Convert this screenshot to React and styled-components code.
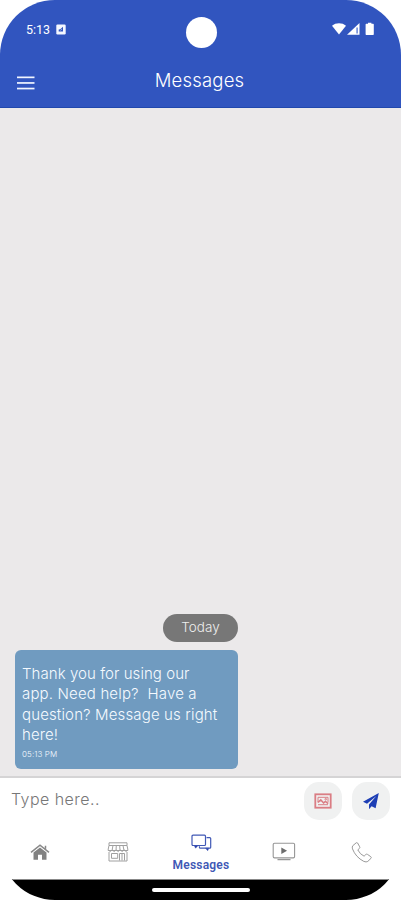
import React from "react";
import styled, { createGlobalStyle } from "styled-components";

const messageLines = [
  { text: "Thank you for using our", spacing: "0.06px" },
  { text: "app. Need help?\u00a0 Have a", spacing: "0.16px" },
  { text: "question? Message us right", spacing: "0.14px" },
  { text: "here!", spacing: "0.1px" },
];

export default function App() {
  return (
    <Phone>
      <GlobalStyle />
      <Header>
        <StatusBar>
          <Clock>
            5:13
            <AlarmIcon />
          </Clock>
          <Camera />
          <StatusIcons />
        </StatusBar>
        <AppBar>
          <MenuButton aria-label="Menu">
            <MenuIcon />
          </MenuButton>
          <Title>Messages</Title>
        </AppBar>
      </Header>

      <Chat>
        <Thread>
          <DayLabel>Today</DayLabel>
          <Bubble>
            {messageLines.map((line) => (
              <Line key={line.text} $spacing={line.spacing}>
                {line.text}
              </Line>
            ))}
            <Time>05:13 PM</Time>
          </Bubble>
        </Thread>
      </Chat>

      <Composer>
        <Placeholder>Type here..</Placeholder>
        <RoundButton aria-label="Add image">
          <ImageIcon />
        </RoundButton>
        <RoundButton aria-label="Send">
          <SendIcon />
        </RoundButton>
      </Composer>

      <Tabs>
        <Tab>
          <HomeIcon />
        </Tab>
        <Tab>
          <StoreIcon />
        </Tab>
        <Tab $active>
          <ChatIcon />
          <TabLabel>Messages</TabLabel>
        </Tab>
        <Tab>
          <VideoIcon />
        </Tab>
        <Tab>
          <PhoneIcon />
        </Tab>
      </Tabs>

      <GestureBar>
        <Handle />
      </GestureBar>
    </Phone>
  );
}

function AlarmIcon() {
  return (
    <svg width="10" height="11" viewBox="0 0 10 11">
      <rect x="0.3" y="0.5" width="9.4" height="10" rx="1.2" fill="#f4f7ff" />
      <path d="M2.7 7.6V5.5l1.5-.3 2.8-2.4v4.6H4.8z" fill="#3155bf" />
      <path d="M4.5 6.3l1.3-1.2" stroke="#f4f7ff" strokeWidth="0.7" />
    </svg>
  );
}

function StatusIcons() {
  return (
    <svg width="42" height="14" viewBox="0 0 42 14" fill="#fff">
      <path d="M0 3.7C3.8.4 10.2.4 14 3.7L7 12.500z" />
      <path d="M27.500 1V12.800H15z" />
      <path d="M24.300 5.600h1.600v5.800h-1.600z" fill="#6f8ada" />
      <path d="M34.300 1.800h1.700V.8h3.400v1h1.700q.7 0 .7.700v9.800q0 .7-.7.700h-6.800q-.7 0-.7-.7V2.500q0-.7.7-.7z" />
    </svg>
  );
}

function MenuIcon() {
  return (
    <svg width="18" height="14" viewBox="0 0 18 14" fill="#f1f5ff">
      <rect y="0.5" width="17.5" height="1.7" />
      <rect y="6.1" width="17.5" height="1.7" />
      <rect y="11.7" width="17.5" height="1.7" />
    </svg>
  );
}

function ImageIcon() {
  return (
    <svg width="18" height="16" viewBox="0 0 18 16" fill="none" stroke="#da7d84">
      <rect x="1.3" y="1.3" width="15.4" height="13.4" strokeWidth="1.8" />
      <path d="M4 9.500V4.300h10v5M4 11.700h10" strokeWidth="1" />
      <path d="M4 9.400l2.800-2.500 2.800 3 1.800-1.500 2.800 2.300" strokeWidth="1.500" />
      <circle cx="11.700" cy="6.200" r="0.800" strokeWidth="1" />
    </svg>
  );
}

function SendIcon() {
  return (
    <svg width="18" height="18" viewBox="0 0 18 18" fill="#1e3fb5">
      <path d="M16.800 1L1 9.800l4 2L14.300 4 7 12.500v4.700l2.600-3 4 2z" />
    </svg>
  );
}

function HomeIcon() {
  return (
    <svg width="20" height="18" viewBox="0 0 20 18">
      <path
        d="M1 9.300l9-7.200 9 7.200M15.500 2.800v3"
        fill="none"
        stroke="#898989"
        strokeWidth="1.500"
      />
      <path d="M3.500 9.500L10 4.400l6.500 5.100v7.300H12v-5H8v5H3.500z" fill="#828282" />
    </svg>
  );
}

function StoreIcon() {
  return (
    <svg width="22" height="20" viewBox="0 0 22 20" fill="none" stroke="#a0a0a0" strokeWidth="1">
      <path d="M2 .8h18v2.700H2zM2 3.500L1.200 7.200v1.300h19.600V7.200L20 3.500M6 3.500L5 8.500M9.300 3.500L9 8.500M12.700 3.500l.3 5M16 3.500l1 5" />
      <path d="M1.200 8q2 3 4 0 2 3 4 0 2 3 4 0 2 3 4 0 2 3 3.600 0M2 10v9h18v-9M4.500 11.500h6.200v4.800H4.500zM12.500 18.500v-7h5v7M15 11.500v7" />
    </svg>
  );
}

function ChatIcon() {
  return (
    <svg width="21" height="18" viewBox="0 0 21 18" fill="none" stroke="#4058b5" strokeWidth="1.200">
      <rect x="1" y="1.200" width="13.500" height="10.300" rx="1" />
      <path d="M15.500 3.600h3.200q1 0 1 1v8.600q0 1-1 1H9.400q-1 0-1-1v-.9" />
      <path d="M3.200 11.500h3.900l-2.500 2.700zM14.500 14.200h3.300l-1.100 2.500z" fill="#2940ad" strokeWidth="0.500" />
    </svg>
  );
}

function VideoIcon() {
  return (
    <svg width="24" height="20" viewBox="0 0 24 20" fill="none" stroke="#969696" strokeWidth="1.100">
      <rect x="1.200" y="1.300" width="21.400" height="14.600" rx="1.300" />
      <path d="M5.500 17.700h13" strokeWidth="1.200" />
      <path d="M9.300 5.600l5.800 3.200-5.800 3.200z" fill="#6d6d6d" stroke="none" />
    </svg>
  );
}

function PhoneIcon() {
  return (
    <svg width="21" height="21" viewBox="0 0 21 21" fill="none" stroke="#999" strokeWidth="1" strokeLinejoin="round">
      <path d="M5.200.8L1.800 3.700q-1 1.100-.3 3.200 3.200 8.300 11.300 12.500 2.500 1.100 4 0l3.200-3.100q.7-.9-.2-1.600l-3.300-2.300q-.9-.6-1.700.1l-1.700 1.700q-4-1.800-6.300-6.300l1.700-1.600q.7-.7.200-1.500L6.600 1q-.6-.7-1.400-.2z" />
    </svg>
  );
}

const GlobalStyle = createGlobalStyle`
  * {
    box-sizing: border-box;
  }

  body {
    margin: 0;
    background: #fff;
  }

  svg {
    display: block;
    flex-shrink: 0;
  }
`;

const Phone = styled.div`
  display: flex;
  flex-direction: column;
  width: 401px;
  height: 900px;
  overflow: hidden;
  border-radius: 55px;
  background: #fff;
  font-family: "Inter", "Liberation Sans", sans-serif;
`;

const Header = styled.header`
  height: 108px;
  background: #3155bf;
  border-bottom: 1px solid #2148ad;
  color: #fff;
`;

const StatusBar = styled.div`
  display: grid;
  grid-template-columns: 1fr 31px 1fr;
  align-items: center;
  height: 58px;
  padding: 0 27px 0 26px;

  > svg {
    justify-self: end;
  }
`;

const Clock = styled.div`
  display: flex;
  align-items: center;
  gap: 6px;
  font-family: Roboto, sans-serif;
  font-size: 12.5px;
`;

const Camera = styled.div`
  width: 31px;
  height: 31px;
  margin: 6px 0 0 1px;
  border-radius: 50%;
  background: #fff;
`;

const AppBar = styled.div`
  display: grid;
  grid-template-columns: 40px 1fr 40px;
  align-items: center;
  height: 49px;
  padding: 0 19px 5px 17px;
`;

const MenuButton = styled.button`
  display: flex;
  padding: 5px 0 0;
  border: 0;
  background: none;
`;

const Title = styled.h1`
  margin: 0;
  font-size: 18.5px;
  font-weight: 300;
  letter-spacing: 0.2px;
  line-height: 24px;
  text-align: center;
`;

const Chat = styled.main`
  display: flex;
  flex: 1;
  align-items: flex-end;
  padding: 0 15px 7px;
  background: #ebe9ea;
`;

const Thread = styled.div`
  display: flex;
  flex-direction: column;
  align-items: flex-end;
  gap: 8px;
  width: 223px;
`;

const DayLabel = styled.div`
  width: 75px;
  height: 28px;
  border-radius: 14px;
  background: #777;
  color: #eee;
  font-size: 13.5px;
  font-weight: 300;
  line-height: 26px;
  text-align: center;
`;

const Bubble = styled.div`
  width: 100%;
  height: 119px;
  padding: 14px 7px 0;
  border-radius: 6px;
  background: #709bc0;
  color: #f5faff;
`;

const Line = styled.div`
  height: 20.3px;
  font-size: 15px;
  font-weight: 300;
  letter-spacing: ${({ $spacing }) => $spacing};
  line-height: 20.3px;
  white-space: nowrap;
`;

const Time = styled.div`
  margin-top: 3px;
  font-size: 8px;
  font-weight: 300;
  letter-spacing: 0.1px;
  line-height: 12px;
`;

const Composer = styled.div`
  display: flex;
  align-items: center;
  gap: 10px;
  height: 49px;
  padding: 0 11px 2px;
  border-top: 2px solid #d5d4d5;
`;

const Placeholder = styled.div`
  flex: 1;
  padding-bottom: 3px;
  color: #777;
  font-size: 16px;
  font-weight: 300;
  letter-spacing: 0.45px;
`;

const RoundButton = styled.button`
  display: flex;
  align-items: center;
  justify-content: center;
  width: 38px;
  height: 38px;
  padding: 0;
  border: 0;
  border-radius: 15px;
  background: #f0f1f1;
`;

const Tabs = styled.nav`
  display: grid;
  grid-template-columns: 79px 78px 88px 78px 77px;
  height: 54px;
`;

const Tab = styled.div`
  display: flex;
  flex-direction: column;
  align-items: center;
  justify-content: ${({ $active }) => ($active ? "flex-start" : "center")};
  padding-top: ${({ $active }) => ($active ? "9px" : "0")};
`;

const TabLabel = styled.span`
  margin-top: 6px;
  color: #4058b5;
  font-family: Roboto, sans-serif;
  font-size: 12px;
  font-weight: 600;
  letter-spacing: 0.2px;
  line-height: 14px;
`;

const GestureBar = styled.div`
  display: flex;
  align-items: center;
  justify-content: center;
  height: 21px;
  border-top: 1px solid #888;
  background: #000;
`;

const Handle = styled.div`
  width: 98px;
  height: 4px;
  border-radius: 2px;
  background: #fff;
`;
